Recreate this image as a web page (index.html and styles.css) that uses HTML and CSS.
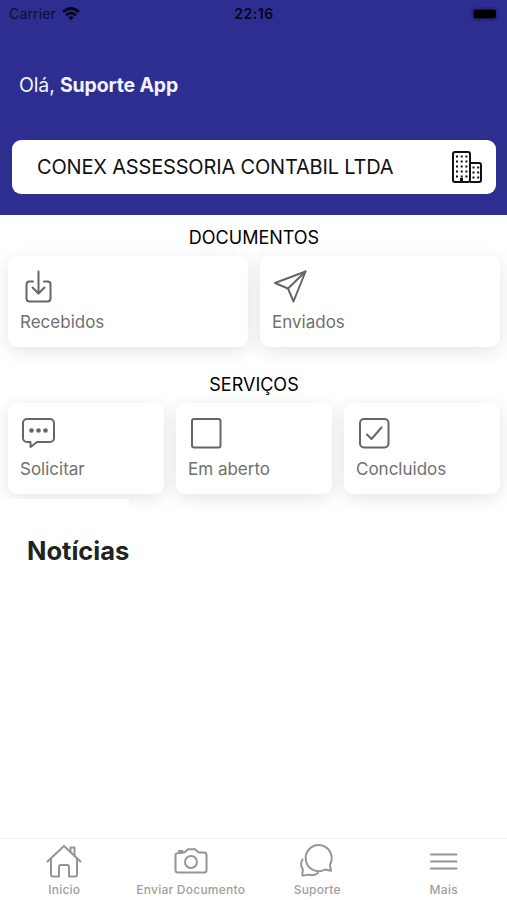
FILE: index.html
```html
<!DOCTYPE html>
<html lang="pt-BR">
<head>
    <meta charset="UTF-8">
    <meta name="viewport" content="width=device-width, initial-scale=1.0">
    <title>Inicio</title>
    <link rel="stylesheet" href="styles.css">
</head>

<body>
    <header>
        <div class="status-bar">
            <div class="carrier">
                <span>Carrier</span>
                <svg width="18" height="14" viewBox="0 0 18 14" fill="none" stroke="#05051c" stroke-width="2.7">
                    <path d="M1 5 Q9 -2 17 5" />
                    <path d="M4 8.2 Q9 3.8 14 8.2" />
                    <path d="M6.2 10.3 Q9 8 11.8 10.3 L9 13.3z" fill="#05051c" stroke="none" />
                </svg>
            </div>
            <div class="clock">22:16</div>
            <div class="battery">
                <svg width="30" height="14" viewBox="0 0 30 14">
                    <rect x="1" y="1" width="25.5" height="12" rx="3.5" fill="none" stroke="#21226f" />
                    <rect x="2.5" y="2.5" width="22.5" height="9" rx="2" fill="#000" />
                    <path d="M28 5 Q29.8 7 28 9z" fill="#21226f" />
                </svg>
            </div>
        </div>
        <div class="greeting">Olá, <b>Suporte App</b></div>
        <button type="button" class="company">
            <span>CONEX ASSESSORIA CONTABIL LTDA</span>
            <svg width="32" height="34" viewBox="0 0 32 34" fill="none" stroke="#111" stroke-width="2" stroke-linejoin="round">
                <rect x="2" y="2" width="17" height="30" rx="2" />
                <path d="M19 13h9a2 2 0 0 1 2 2v15a2 2 0 0 1-2 2h-9" />
                <path d="M5 6.5h12M5 11.5h12M5 16.5h12M5 21.5h12M5 26.5h12" stroke-dasharray="2 2.7" />
                <path d="M21.5 17.5h7M21.5 22.5h7M21.5 27.5h7" stroke-dasharray="2 2.7" />
                <path d="M10.5 28v4" stroke-width="3" />
            </svg>
        </button>
    </header>

    <main>
        <h2>DOCUMENTOS</h2>
        <div class="cards">
            <div class="card">
                <svg width="36" height="36" viewBox="0 0 36 36">
                    <path d="M13 12.5H9.500a3 3 0 0 0-3 3v14a3 3 0 0 0 3 3h18a3 3 0 0 0 3-3v-14a3 3 0 0 0-3-3H24" />
                    <path d="M18.500 2.500v21.500M12.500 18.500l6 6 6-6" />
                </svg>
                <span>Recebidos</span>
            </div>
            <div class="card">
                <svg width="36" height="36" viewBox="0 0 36 36">
                    <path d="M33.500 2.500L3 14 16 19.500 21.500 32.500z" />
                    <path d="M33.500 2.500L16 19.500" />
                </svg>
                <span>Enviados</span>
            </div>
        </div>

        <h2>SERVIÇOS</h2>
        <div class="cards">
            <div class="card">
                <svg width="36" height="36" viewBox="0 0 36 36">
                    <path d="M7 3h23a4 4 0 0 1 4 4v15a4 4 0 0 1-4 4H17l-6.500 5v-5H7a4 4 0 0 1-4-4V7a4 4 0 0 1 4-4z" />
                    <g class="dots">
                        <circle cx="11.500" cy="14.500" r="2.300" />
                        <circle cx="18.500" cy="14.500" r="2.300" />
                        <circle cx="25.500" cy="14.500" r="2.300" />
                    </g>
                </svg>
                <span>Solicitar</span>
            </div>
            <div class="card">
                <svg width="36" height="36" viewBox="0 0 36 36">
                    <rect x="4" y="3" width="28.500" height="28.500" rx="2" />
                </svg>
                <span>Em aberto</span>
            </div>
            <div class="card">
                <svg width="36" height="36" viewBox="0 0 36 36">
                    <rect x="4" y="3" width="28.500" height="28.500" rx="4" />
                    <path d="M11 18.500l4.500 4.500L25.500 11.500" />
                </svg>
                <span>Concluidos</span>
            </div>
        </div>

        <div class="news">
            <h1>Notícias</h1>
        </div>
    </main>

    <nav>
        <a class="tab">
            <svg width="36" height="36" viewBox="0 0 36 36">
                <path d="M1.500 18.500L18 3l16.500 15.500" />
                <path d="M5 16v15.500a2 2 0 0 0 2 2h6V24a2 2 0 0 1 2-2h6a2 2 0 0 1 2 2v9.500h6a2 2 0 0 0 2-2V16M24.500 8.500V4.500h4v8.500" />
            </svg>
            <span>Inicio</span>
        </a>
        <a class="tab">
            <svg width="36" height="36" viewBox="0 0 36 36">
                <path d="M6 10l5-.5c2-.3 2.500-2.500 4-3.200h7c1.500.7 2 2.900 4 3.200h5c1.500 0 2.500 1 2.500 2.500V27c0 1.500-1 2.500-2.500 2.500H5c-1.500 0-2.500-1-2.500-2.500V12C2.500 11 4 10 6 10z" />
                <path d="M6 9.500V8h3.500v1.500" />
                <circle cx="18" cy="19" r="6" />
            </svg>
            <span>Enviar Documento</span>
        </a>
        <a class="tab">
            <svg width="36" height="36" viewBox="0 0 36 36">
                <path d="M31 21.500A13 13 0 1 0 26 26.500c2 .3 4 1.200 6.200 1.300-.7-2-1.200-4.300-1.200-6.300z" />
                <path d="M3.500 16.500c-2 3-2 6 .2 9.500.3 2-.7 4.500-.2 6.500 2 .5 4.500-1 6.500-.8 3 .8 6.500.5 9-1.700" />
            </svg>
            <span>Suporte</span>
        </a>
        <a class="tab">
            <svg width="36" height="36" viewBox="0 0 36 36">
                <path d="M5 11.500h25.500M5 18.500h25.500M5 25.500h25.500" />
            </svg>
            <span>Mais</span>
        </a>
    </nav>
</body>
</html>
```
FILE: styles.css
```css
* {
    box-sizing: border-box;
}

body {
    margin: 0;
    height: 100vh;
    display: flex;
    flex-direction: column;
    overflow: hidden;
    background-color: white;
    font-family: Inter, "Liberation Sans", sans-serif;
}

header {
    height: 215px;
    padding: 0 11px 0 12px;
    background-color: #2d2e90;
}

.status-bar {
    display: grid;
    grid-template-columns: 1fr auto 1fr;
    align-items: center;
    height: 27px;
    margin: 0 -5px 0 -3px;
    font-size: 14px;
    color: #0c0c35;
}

.carrier {
    display: flex;
    align-items: center;
    gap: 6px;
    letter-spacing: 0.15px;
}

.clock {
    margin-right: 2px;
    font-weight: 600;
    letter-spacing: 0.5px;
    color: #05051c;
}

.battery {
    display: flex;
    justify-content: flex-end;
}

.greeting {
    margin: 46px 0 0 7px;
    height: 25px;
    line-height: 25px;
    font-size: 19.5px;
    letter-spacing: -0.15px;
    color: #f3f3ff;
}

.company {
    display: flex;
    justify-content: space-between;
    align-items: center;
    width: 100%;
    height: 54px;
    margin-top: 42px;
    padding: 0 13px 0 25px;
    border: none;
    border-radius: 9px;
    background-color: white;
    font-family: inherit;
    font-size: 20px;
    letter-spacing: -0.17px;
    color: #111;
}

main {
    flex: 1;
    padding: 0 7px 0 8px;
}

h2 {
    margin: 0;
    padding-top: 10px;
    height: 41px;
    line-height: 25px;
    font-size: 18px;
    font-weight: 400;
    text-align: center;
    color: #000;
}

.cards {
    display: flex;
    gap: 12px;
    margin-bottom: 15px;
}

.card {
    flex: 1;
    display: flex;
    flex-direction: column;
    height: 91px;
    padding: 13px 12px 0;
    border-radius: 9px;
    background-color: white;
    box-shadow: 0 4px 18px rgba(0, 0, 0, 0.11);
    font-size: 17px;
    line-height: 24px;
    color: #707070;
}

.card svg,
.tab svg {
    fill: none;
    stroke: #666;
    stroke-width: 2;
    stroke-linecap: round;
    stroke-linejoin: round;
}

.card span {
    margin-top: 5px;
}

.card .dots {
    fill: #666;
    stroke: none;
}

.news {
    position: relative;
    width: 129px;
    margin: -10px 0 0 -8px;
    padding: 35px 0 20px 27px;
    border-radius: 0 3px 0 0;
    background-color: white;
}

h1 {
    margin: 0;
    font-size: 25.5px;
    line-height: 34px;
    color: #222;
}

nav {
    display: flex;
    height: 62px;
    padding-left: 1px;
    border-top: 1px solid #eee;
    background-color: white;
}

.tab {
    flex: 1;
    display: flex;
    flex-direction: column;
    align-items: center;
    padding-top: 4px;
    font-size: 12px;
    line-height: 16px;
    font-weight: 500;
    letter-spacing: 0.25px;
    color: #a0a0a0;
}

.tab svg {
    stroke: #959595;
}

.tab span {
    margin-top: 3px;
}
```
